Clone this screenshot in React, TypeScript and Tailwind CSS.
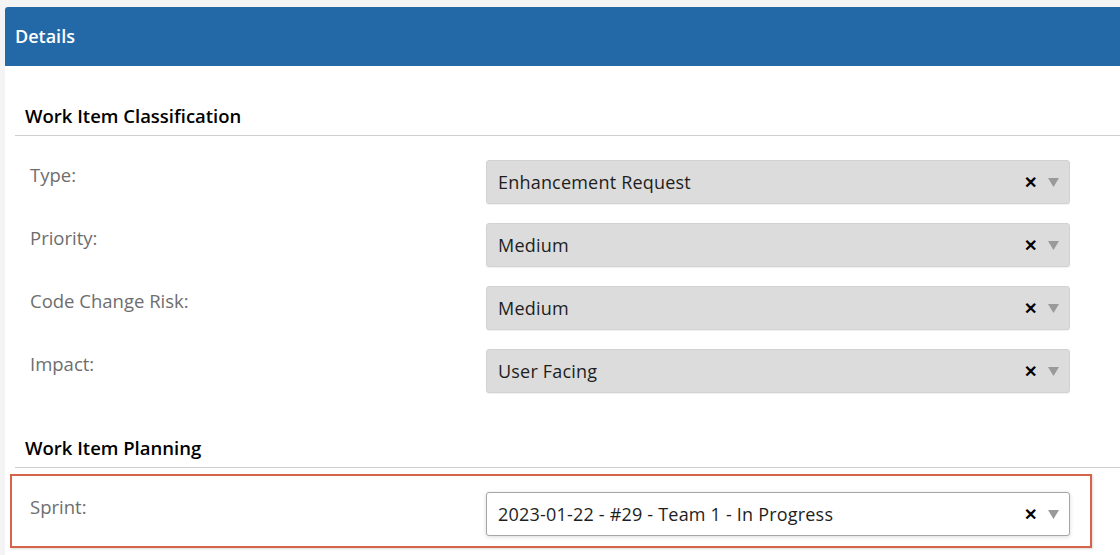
import React from 'react';

interface SelectProps {
  value: string;
  variant?: 'filled' | 'white';
}

const FakeSelect: React.FC<SelectProps> = ({ value, variant = 'filled' }) => {
  const base =
    variant === 'filled'
      ? 'bg-[#dcdcdc] border-[#d2d2d2] shadow-[0_1px_1px_rgba(0,0,0,0.06)]'
      : 'bg-white border-[#a6a6a6] shadow-[0_1px_4px_rgba(0,0,0,0.15)]';
  return (
    <div className={`flex h-[44px] w-[584px] items-center rounded-[3px] border pl-[11px] pr-[10px] ${base}`}>
      <span className="flex-1 truncate text-[18px] tracking-[0.2px] text-[#1e1e1e]">{value}</span>
      <span className="mr-[11px] text-[16px] font-bold leading-none text-black">✕</span>
      <svg width="11" height="9" viewBox="0 0 11 9" aria-hidden="true">
        <path d="M0 0 H11 L5.5 9 Z" fill="#9a9a9a" />
      </svg>
    </div>
  );
};

const Row: React.FC<{ label: string; value: string; variant?: 'filled' | 'white' }> = ({ label, value, variant }) => (
  <div className="flex items-start">
    <div className="w-[456px] pt-[2px] text-[18.5px] leading-[26px] text-[#6e6e6e]">{label}</div>
    <FakeSelect value={value} variant={variant} />
  </div>
);

const SectionHeading: React.FC<{ title: string }> = ({ title }) => (
  <div className="ml-[10px] border-b border-[#cfcfcf] pb-[6px] pl-[10px] text-[18.5px] font-semibold leading-[26px] text-black">
    {title}
  </div>
);

export default function App() {
  return (
    <div
      className="h-[555px] w-[1120px] overflow-hidden bg-[#f4f4f4] pl-[5px] pt-[7px]"
      style={{ fontFamily: '"Open Sans", "Noto Sans", sans-serif' }}
    >
      <div className="h-full rounded-tl-[3px] bg-white">
        {/* Header */}
        <div className="flex h-[59px] items-center rounded-tl-[3px] bg-[#2369a8] px-[10px]">
          <h2 className="text-[18px] font-semibold text-white">Details</h2>
        </div>

        {/* Classification */}
        <div className="pt-[37px]">
          <SectionHeading title="Work Item Classification" />
          <div className="mt-[24px] flex flex-col gap-[19px] pl-[25px]">
            <Row label="Type:" value="Enhancement Request" />
            <Row label="Priority:" value="Medium" />
            <Row label="Code Change Risk:" value="Medium" />
            <Row label="Impact:" value="User Facing" />
          </div>
        </div>

        {/* Planning */}
        <div className="pt-[42px]">
          <SectionHeading title="Work Item Planning" />
          <div className="ml-[5px] mt-[6px] w-[1082px] border-2 border-[#d6644a] pb-[10px] pl-[18px] pt-[16px] shadow-[1px_1px_2px_rgba(0,0,0,0.15)]">
            <Row label="Sprint:" value="2023-01-22 - #29 - Team 1 - In Progress" variant="white" />
          </div>
        </div>
      </div>
    </div>
  );
}
